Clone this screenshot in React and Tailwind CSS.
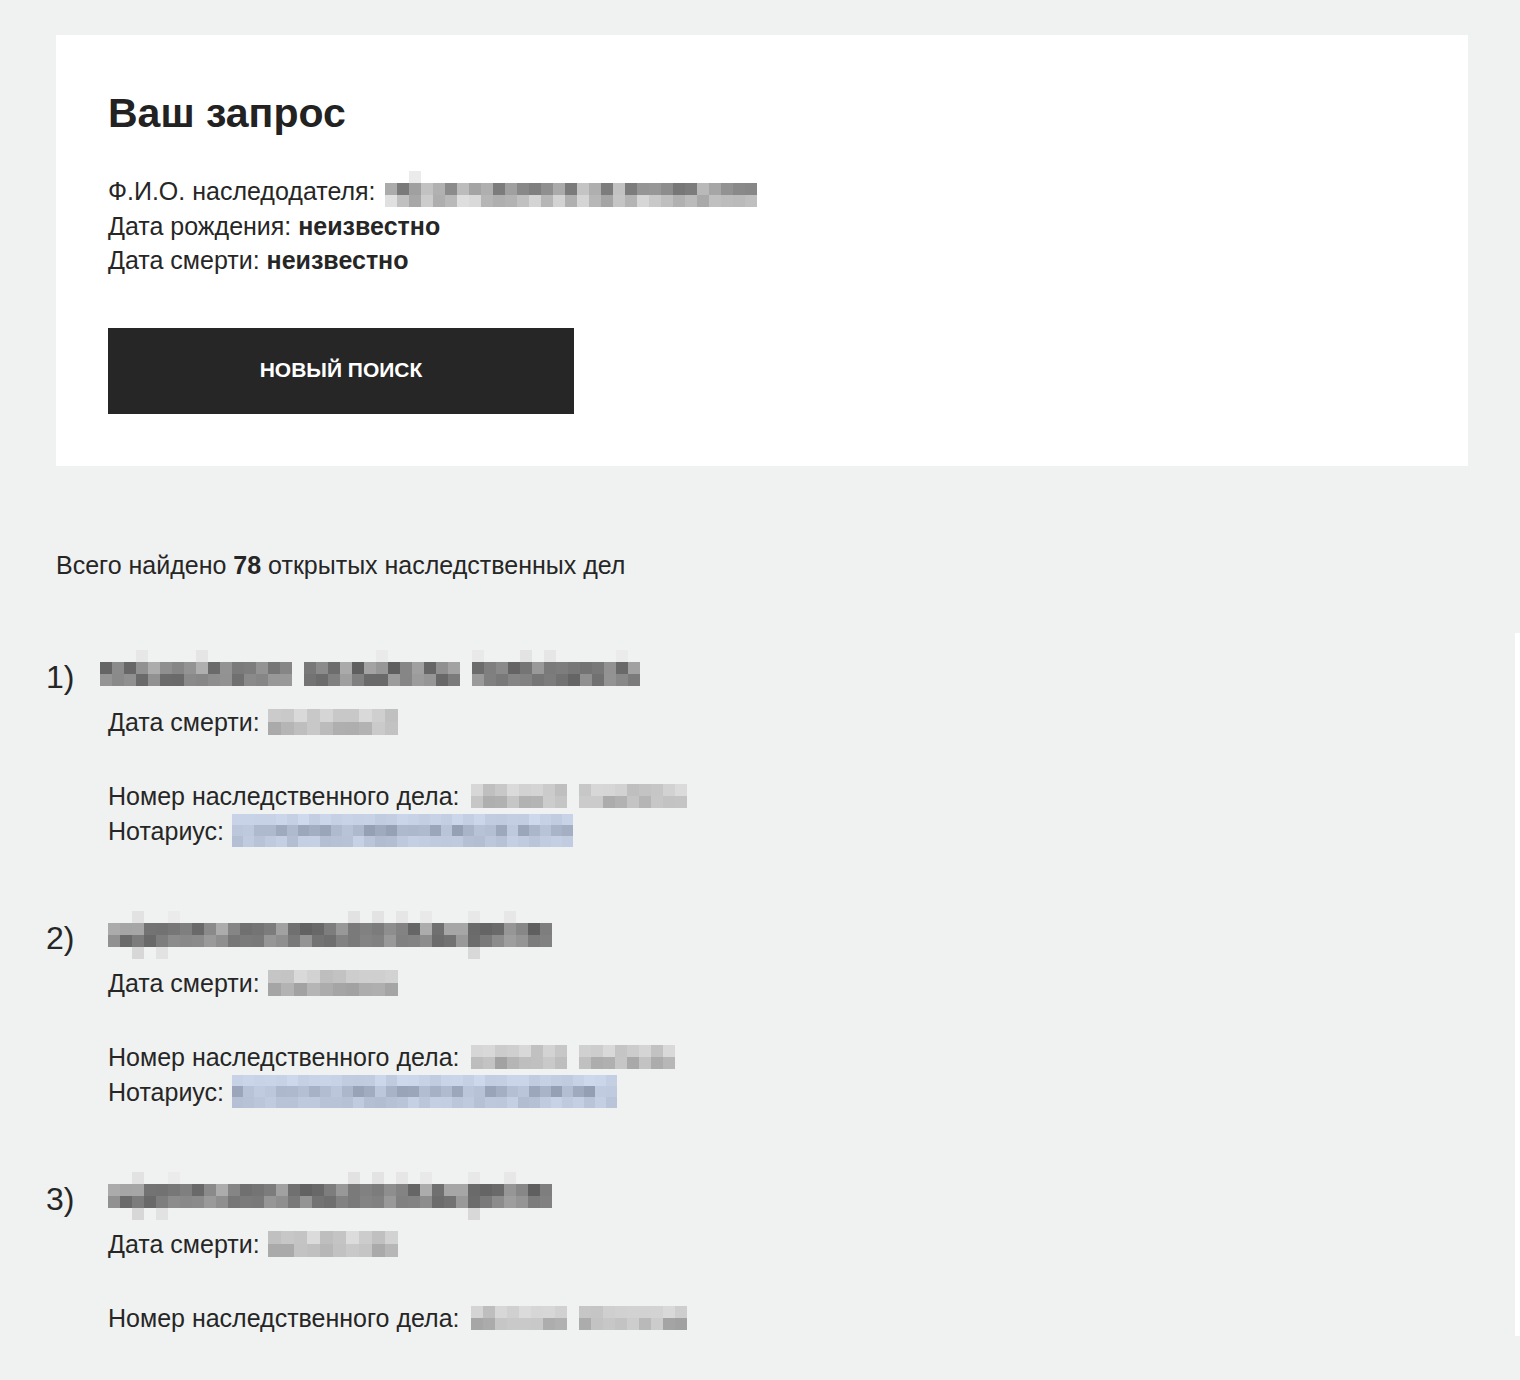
import React from 'react';

// small seeded generator so the censored blocks look the same on every render
function makeRand(seed) {
  let t = seed;
  return () => {
    t = (t + 0x6d2b79f5) | 0;
    let r = Math.imul(t ^ (t >>> 15), 1 | t);
    r = (r + Math.imul(r ^ (r >>> 7), 61 | r)) ^ r;
    return ((r ^ (r >>> 14)) >>> 0) / 4294967296;
  };
}

// pixelated placeholder for hidden personal data
function Mosaic({ seed, cols, rows, cell = 12, tint = 'gray', gaps = [], className = '' }) {
  const rand = makeRand(seed);
  return (
    <div className={`flex flex-col shrink-0 ${className}`}>
      {rows.map((row, ri) => (
        <div key={ri} className="flex">
          {Array.from({ length: cols }).map((_, ci) => {
            let bg = 'transparent';
            const on = rand() < row.fill;
            const v = Math.round(row.lo + rand() * (row.hi - row.lo));
            if (on && !gaps.includes(ci)) {
              bg = tint === 'blue'
                ? `rgb(${v - 22}, ${v - 12}, ${Math.min(v + 8, 245)})`
                : `rgb(${v}, ${v}, ${v})`;
            }
            return <div key={ci} style={{ width: cell, height: cell, background: bg }} />;
          })}
        </div>
      ))}
    </div>
  );
}

const faint = { lo: 226, hi: 236, fill: 0.2 };
const dark = { lo: 95, hi: 175, fill: 1 };
const darker = { lo: 100, hi: 160, fill: 1 };
const mid = { lo: 160, hi: 205, fill: 1 };
const light = { lo: 190, hi: 220, fill: 1 };
const descend = { lo: 215, hi: 228, fill: 0.06 };

const cases = [
  {
    n: 1,
    name: { seed: 11, cols: 45, rows: [faint, dark, darker], gaps: [16, 30], start: 'ml-[-8px]' },
    date: { seed: 21, cols: 10 },
    number: { seed: 31, cols: 18, gaps: [8] },
    notary: { seed: 41, cols: 31 },
  },
  {
    n: 2,
    name: { seed: 12, cols: 37, rows: [faint, dark, darker, descend], gaps: [] },
    date: { seed: 22, cols: 10 },
    number: { seed: 32, cols: 17, gaps: [8] },
    notary: { seed: 42, cols: 35 },
  },
  {
    n: 3,
    name: { seed: 12, cols: 37, rows: [faint, dark, darker, descend], gaps: [] },
    date: { seed: 23, cols: 10 },
    number: { seed: 33, cols: 18, gaps: [8] },
  },
];

function CaseItem({ item }) {
  const { start = '', ...name } = item.name;
  return (
    <div className="flex flex-col">
      <div className="flex items-start h-[40px]">
        <span className="w-[62px] text-[32px] leading-[40px] text-[#262626]">{item.n})</span>
        <Mosaic {...name} className={`-mt-[7px] ${start}`} />
      </div>
      <div className="pl-[62px] mt-[8px] flex flex-col">
        <div className="flex items-center h-[34.5px] gap-[8px]">
          <span>Дата смерти:</span>
          <Mosaic seed={item.date.seed} cols={item.date.cols} cell={13} rows={[light, mid]} />
        </div>
        <div className="flex items-center h-[34.5px] gap-[11px] mt-[39.5px]">
          <span>Номер наследственного дела:</span>
          <Mosaic seed={item.number.seed} cols={item.number.cols} cell={12} rows={[light, mid]} gaps={item.number.gaps} />
        </div>
        {item.notary && (
          <div className="flex items-center h-[34.5px] gap-[8px]">
            <span>Нотариус:</span>
            <Mosaic
              seed={item.notary.seed}
              cols={item.notary.cols}
              cell={11}
              tint="blue"
              rows={[{ lo: 215, hi: 230, fill: 1 }, { lo: 170, hi: 215, fill: 1 }, { lo: 200, hi: 222, fill: 1 }]}
            />
          </div>
        )}
      </div>
    </div>
  );
}

export default function App() {
  return (
    <div className="min-h-[1380px] bg-[#f0f2f1] pt-[35px] text-[25px] leading-[34.5px] text-[#262626] font-['Liberation_Sans',Arial,sans-serif]">
      <div className="ml-[56px] mr-[52px]">
        {/* request summary */}
        <div className="bg-white pl-[52px] pt-[54px] pb-[52px]">
          <h1 className="text-[41px] leading-[48px] font-bold text-[#222]">Ваш запрос</h1>
          <div className="mt-[37px] flex flex-col">
            <div className="flex items-center h-[34.5px] gap-[9px]">
              <span>Ф.И.О. наследодателя:</span>
              <Mosaic
                seed={5}
                cols={31}
                cell={12}
                rows={[{ lo: 228, hi: 240, fill: 0.2 }, { lo: 115, hi: 200, fill: 1 }, { lo: 165, hi: 225, fill: 1 }]}
                className="-mt-[6px] -mb-[2px]"
              />
            </div>
            <div>
              Дата рождения: <b className="font-bold">неизвестно</b>
            </div>
            <div>
              Дата смерти: <b className="font-bold">неизвестно</b>
            </div>
          </div>
          <button className="mt-[50px] w-[466px] h-[86px] bg-[#262626] text-white text-[21px] font-bold uppercase">
            Новый поиск
          </button>
        </div>

        <p className="mt-[82px]">
          Всего найдено <b className="font-bold">78</b> открытых наследственных дел
        </p>
      </div>

      {/* found cases */}
      <div className="flex mt-[51px]">
        <div className="flex-1 pl-[46px] pt-[24px] flex flex-col gap-[70px]">
          {cases.map((c) => (
            <CaseItem key={c.n} item={c} />
          ))}
        </div>
        <div className="w-[5px] bg-white" />
      </div>
    </div>
  );
}
